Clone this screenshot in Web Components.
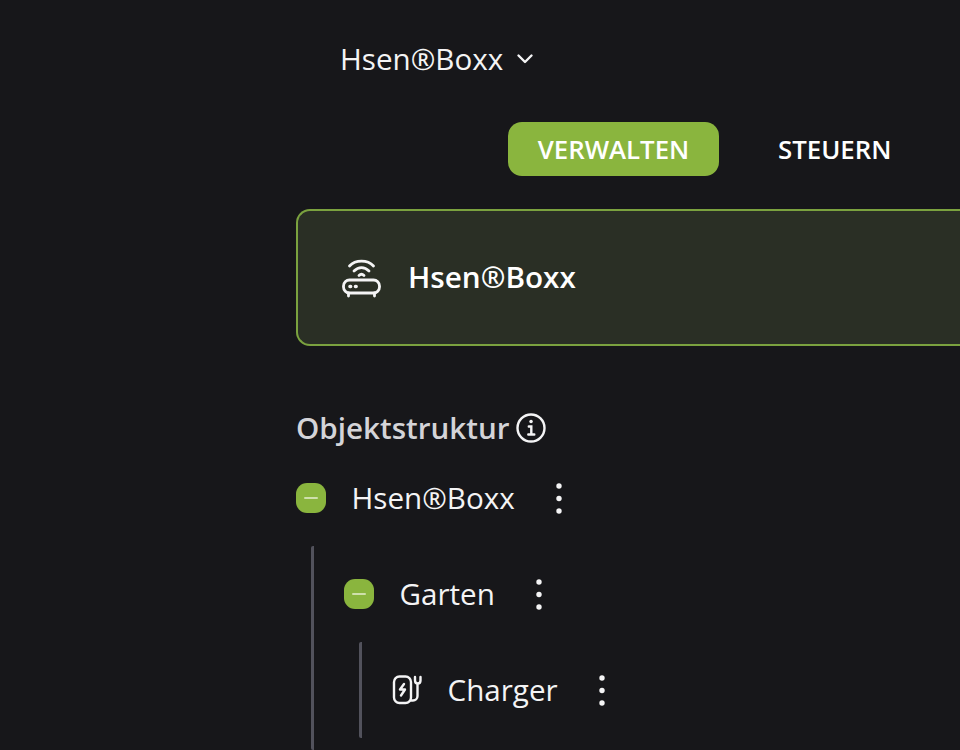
<!doctype html>
<html lang="de">
<head>
<meta charset="utf-8">
<title>Hsen®Boxx</title>
<style>
  html, body {
    margin: 0;
    height: 100%;
    overflow: hidden;
    background: #17171a;
    color: #fff;
    font-family: "Open Sans", "Liberation Sans", sans-serif;
  }
</style>
</head>
<body>
<app-page>
  <app-device-select slot="select">Hsen®Boxx</app-device-select>
  <app-tabs slot="tabs">
    <button data-active>VERWALTEN</button>
    <button>STEUERN</button>
  </app-tabs>
  <app-device-card slot="card">Hsen®Boxx</app-device-card>
  <app-structure slot="tree" title="Objektstruktur">
    <app-tree-node label="Hsen®Boxx" kind="group" open more>
      <app-tree-node label="Garten" kind="group" open>
        <app-tree-node label="Charger" kind="charger"></app-tree-node>
      </app-tree-node>
    </app-tree-node>
  </app-structure>
</app-page>

<script>
/* eslint-env browser */

customElements.define('app-page', class AppPage extends HTMLElement {
  constructor () {
    super()
    const root = this.attachShadow({ mode: 'open' })
    root.innerHTML = `<style>
      :host {
        display: block;
        box-sizing: border-box;
        width: 960px;
        height: 750px;
        padding-left: 296px;
        overflow: hidden
      }
      .select { padding: 36px 0 0 44px; height: 122px; box-sizing: border-box }
      .tabs { padding-left: 212px; height: 87px; box-sizing: border-box }
      .tree { padding-top: 61px }
    </style>
    <div class="select"><slot name="select"></slot></div>
    <div class="tabs"><slot name="tabs"></slot></div>
    <slot name="card"></slot>
    <div class="tree"><slot name="tree"></slot></div>`
  }
})

customElements.define('app-device-select', class AppDeviceSelect extends HTMLElement {
  constructor () {
    super()
    const root = this.attachShadow({ mode: 'open' })
    root.innerHTML = `<style>
      :host {
        display: flex;
        align-items: center;
        gap: 13px;
        height: 46px;
        font-size: 29.6px;
        color: #f4f4f5
      }
      span { padding-bottom: 2px }
      svg { display: block; width: 18px; height: 18px }
    </style>
    <span><slot></slot></span>
    <svg viewBox="0 0 18 18" fill="none" stroke="#f4f4f5" stroke-width="2.4" stroke-linecap="round" stroke-linejoin="round">
      <path d="M2.500 5.500 9 12l6.500-6.500"/>
    </svg>`
  }
})

customElements.define('app-tabs', class AppTabs extends HTMLElement {
  constructor () {
    super()
    const root = this.attachShadow({ mode: 'open' })
    root.innerHTML = `<style>
      :host { display: flex }
      ::slotted(button) {
        all: unset;
        box-sizing: border-box;
        height: 54px;
        line-height: 53px;
        border-radius: 14px;
        font-family: "Open Sans", "Liberation Sans", sans-serif;
        font-size: 25.8px;
        font-weight: 600;
        color: #fff
      }
      ::slotted(button[data-active]) {
        width: 211px;
        text-align: center;
        margin-right: 59px;
        background: #8ab53e
      }
    </style><slot></slot>`
  }
})

customElements.define('app-device-card', class AppDeviceCard extends HTMLElement {
  constructor () {
    super()
    const root = this.attachShadow({ mode: 'open' })
    root.innerHTML = `<style>
      :host {
        display: flex;
        align-items: center;
        box-sizing: border-box;
        height: 137px;
        padding-left: 44px;
        gap: 26px;
        border: 2px solid #7ba23f;
        border-right: 0;
        border-radius: 14px 0 0 14px;
        background: #2a2f25;
        font-size: 29.7px;
        font-weight: 600;
        color: #fff
      }
      span { padding-bottom: 2px }
      svg { display: block; width: 40px; height: 40px }
    </style>
    <svg viewBox="0 0 40 40" fill="none" stroke="#f4f4f5" stroke-width="2.800" stroke-linecap="round" stroke-linejoin="round">
      <path d="M7.500 8C13.500 1.500 25.500 1.500 31.500 8"/>
      <path d="M12 13c4.500-4.500 10.500-4.500 15 0"/>
      <path d="M17 17.500c1.500-1.500 3.500-1.500 5 0"/>
      <rect x="1.500" y="22" width="36" height="13" rx="6"/>
      <path d="M6.500 35v3M32.500 35v3"/>
      <path d="M8 28.500h.6M13.500 28.500h.6" stroke-width="3.600"/>
    </svg>
    <span><slot></slot></span>`
  }
})

customElements.define('app-structure', class AppStructure extends HTMLElement {
  constructor () {
    super()
    const root = this.attachShadow({ mode: 'open' })
    root.innerHTML = `<style>
      :host { display: block }
      h2 {
        display: flex;
        align-items: center;
        gap: 6px;
        height: 42px;
        margin: 0;
        font-size: 29.6px;
        font-weight: 600;
        color: #d4d4d8
      }
      h2 span { padding-bottom: 2px }
      svg { display: block; width: 30px; height: 30px }
      .body { padding-top: 1px }
    </style>
    <h2><span id="title"></span>
      <svg viewBox="0 0 30 30" fill="none" stroke="#f4f4f5" stroke-width="2.400" stroke-linecap="round">
        <circle cx="15" cy="15" r="13.500"/>
        <path d="M12.800 13.500h2.500v8M12.300 21.500h6"/>
        <path d="M15 8.500h.1" stroke-width="3.400"/>
      </svg>
    </h2>
    <div class="body"><slot></slot></div>`
    root.getElementById('title').textContent = this.getAttribute('title')
  }
})

const nodeIcons = {
  group: '<span class="toggle"><i></i></span>',
  charger: `<svg class="kind" viewBox="0 0 30 30" fill="none" stroke="#f4f4f5" stroke-width="2.400" stroke-linecap="round" stroke-linejoin="round">
      <rect x="2" y="1.500" width="17" height="26.500" rx="5.500"/>
      <path d="M12 9 8 14.500h5l-4 6"/>
      <path d="M19 25.500h2c2.500 0 4.500-2 4.500-4.500V9.500"/>
      <path d="M23 2v3.500c0 4 5.500 4 5.500 0V2"/>
    </svg>`
}

customElements.define('app-tree-node', class AppTreeNode extends HTMLElement {
  constructor () {
    super()
    const root = this.attachShadow({ mode: 'open' })
    root.innerHTML = `<style>
      :host { display: block }
      .row {
        display: flex;
        align-items: center;
        height: 96px;
        font-size: 29.6px;
        color: #f4f4f5
      }
      .toggle {
        flex: none;
        display: flex;
        align-items: center;
        justify-content: center;
        width: 30px;
        height: 30px;
        border-radius: 11px;
        background: #8ab53e
      }
      .toggle i { display: block; width: 14px; height: 2px; border-radius: 1px; background: #cfe0ab }
      .kind { flex: none; display: block; width: 30px; height: 30px }
      .label { margin-left: 25.500px; padding-bottom: 2px }
      .more { flex: none; display: block; width: 6px; height: 31px; margin-left: 41px }
      .children { margin-left: 15px; border-left: 3px solid #52525c; border-radius: 2px; padding-left: 30px }
      :host([more]) .children { padding-bottom: 12px }
    </style>
    <div class="row">
      <span id="icon"></span>
      <span class="label" id="label"></span>
      <svg class="more" viewBox="0 0 6 31" fill="#f4f4f5">
        <circle cx="3" cy="3" r="2.700"/><circle cx="3" cy="15.500" r="2.700"/><circle cx="3" cy="28" r="2.700"/>
      </svg>
    </div>
    <div class="children" id="children"><slot></slot></div>`
    const icon = root.getElementById('icon')
    icon.style.display = 'contents'
    icon.innerHTML = nodeIcons[this.getAttribute('kind')]
    root.getElementById('label').textContent = this.getAttribute('label')
    if (!this.hasAttribute('open')) root.getElementById('children').remove()
  }
})
</script>
</body>
</html>
